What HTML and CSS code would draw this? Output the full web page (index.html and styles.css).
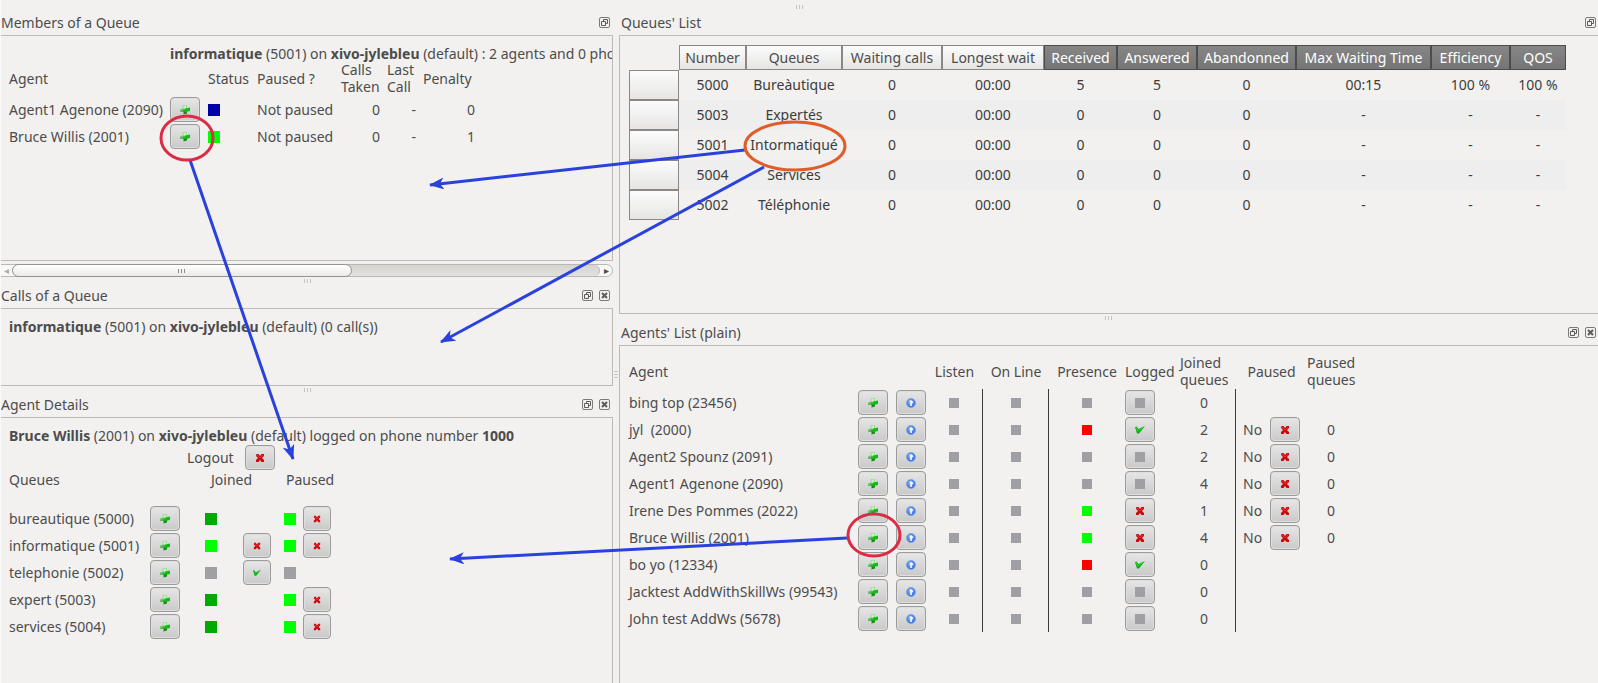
FILE: index.html
```html
<!DOCTYPE html>
<html lang="en">
<head>
<meta charset="utf-8">
<title>Queues and agents</title>
<link rel="stylesheet" href="styles.css">
</head>
<body>
<svg class="defs" aria-hidden="true">
  <defs>
    <linearGradient id="g-left" x1="0" y1="0" x2="1" y2="1"><stop offset="0" stop-color="#a5e09e"/><stop offset="1" stop-color="#158a15"/></linearGradient>
    <radialGradient id="g-info" cx=".45" cy=".4" r=".6"><stop offset="0" stop-color="#a9c8fb"/><stop offset=".6" stop-color="#4c86ee"/><stop offset="1" stop-color="#3a6fd8"/></radialGradient>
    <marker id="head" viewBox="0 0 15 12" refX="14" refY="6" markerWidth="15" markerHeight="12" markerUnits="userSpaceOnUse" orient="auto"><path d="M15 6 0 0l4 6-4 6z" fill="#2a41dc"/></marker>
  </defs>
  <symbol id="plus" viewBox="0 0 10 10"><path d="M3 .5 6.500 0V3.500L4 5 3 4z" fill="#c9efc2" stroke="#8bd884" stroke-width=".7"/><path d="M0 4 4 3.500 5 6.500 0 7z" fill="url(#g-left)"/><path d="M3.500 6 7 5V8.500L3.500 9.500z" fill="#178a17"/><path d="M4.500 3.700 10 2.500V6L4.500 7.200z" fill="#0fbc12"/></symbol>
  <symbol id="info" viewBox="0 0 10 10"><circle cx="5" cy="5" r="4.500" fill="url(#g-info)" stroke="#7f9fdc" stroke-width=".8"/><path d="M3.500 2.500h2.200L7.500 4.200 5.800 5.500V8H4.300V4.500z" fill="#fff"/></symbol>
  <symbol id="cross" viewBox="-.5 -.5 10 10"><path d="M1 .5h2L4.500 2.500 6 .5h2.500v2L6.500 4.500l2 2v2H6L4.500 6.500 3 8.500H.5v-2l2-2-2-2z" fill="#cb0a0f"/><path d="M1.500 1.500 4.500 4.500 7.500 1.500" fill="none" stroke="#e8322e"/></symbol>
  <symbol id="tick" viewBox="0 0 10 8"><path d="M0 1 1.500.5 3.500 3 10 0 4 7.500H2z" fill="#12a916"/><path d="M1 1.500 3 5 8 1.500" fill="none" stroke="#23dd2b"/></symbol>
  <symbol id="float" viewBox="0 0 11 11"><rect x=".5" y=".5" width="10" height="10" rx="1.500" fill="none" stroke="#7b7a78"/><path d="M4.500 4V2.500h4v4H7M2.500 4.500h4v4h-4z" fill="none" stroke="#5c5b59"/></symbol>
  <symbol id="close" viewBox="0 0 11 11"><rect x=".5" y=".5" width="10" height="10" rx="1.500" fill="none" stroke="#7b7a78"/><path d="m3 3 5 5m0-5-5 5" stroke="#5c5b59" stroke-width="2"/></symbol>
</svg>

<div class="window">
  <div class="grip-row"><span class="grip"></span></div>
  <div class="docks">
    <div class="column">
      <section class="dock">
        <header class="dock-title"><h2>Members of a Queue</h2><button class="tool" aria-label="Float"><svg><use href="#float"/></svg></button></header>
        <div class="dock-body members-body">
          <table class="members">
            <colgroup><col class="c-name"><col class="c-btn"><col class="c-status"><col class="c-paused"><col class="c-taken"><col class="c-last"><col class="c-penalty"></colgroup>
            <tbody>
              <tr class="caption"><td></td><td colspan="6"><b>informatique</b> (5001) on <b>xivo-jylebleu</b> (default) : 2 agents and 0 phones</td></tr>
              <tr class="heads"><th>Agent</th><th></th><th>Status</th><th>Paused ?</th><th>Calls<br>Taken</th><th class="gap">Last<br>Call</th><th class="gap">Penalty</th></tr>
              <tr><td>Agent1 Agenone (2090)</td><td><button class="btn" aria-label="Agent details"><svg class="i10"><use href="#plus"/></svg></button></td><td><i class="led big blue"></i></td><td>Not paused</td><td class="num">0</td><td class="num">-</td><td class="num">0</td></tr>
              <tr><td>Bruce Willis (2001)</td><td><button class="btn" aria-label="Agent details"><svg class="i10"><use href="#plus"/></svg></button></td><td><i class="led big green"></i></td><td>Not paused</td><td class="num">0</td><td class="num">-</td><td class="num">1</td></tr>
            </tbody>
          </table>
        </div>
        <div class="scroll"><span class="arrow off">◂</span><span class="track"><span class="thumb"><span class="grip dark"></span></span></span><span class="arrow">▸</span></div>
      </section>
      <div class="grip-row"><span class="grip"></span></div>
      <section class="dock">
        <header class="dock-title"><h2>Calls of a Queue</h2><button class="tool" aria-label="Float"><svg><use href="#float"/></svg></button><button class="tool" aria-label="Close"><svg><use href="#close"/></svg></button></header>
        <div class="dock-body calls-body"><p><b>informatique</b> (5001) on <b>xivo-jylebleu</b> (default) (0 call(s))</p></div>
      </section>
      <div class="grip-row"><span class="grip"></span></div>
      <section class="dock fill">
        <header class="dock-title"><h2>Agent Details</h2><button class="tool" aria-label="Float"><svg><use href="#float"/></svg></button><button class="tool" aria-label="Close"><svg><use href="#close"/></svg></button></header>
        <div class="dock-body fill details-body">
          <p><b>Bruce Willis</b> (2001) on <b>xivo-jylebleu</b> (default) logged on phone number <b>1000</b></p>
          <div class="logout"><label for="logout">Logout</label><button class="btn" id="logout"><svg class="i10"><use href="#cross"/></svg></button></div>
          <table class="details">
            <colgroup><col class="d-name"><col class="d-btn"><col class="d-led"><col class="d-act"><col class="d-led2"><col class="d-act2"></colgroup>
            <tbody>
              <tr class="heads"><th>Queues</th><th></th><th colspan="2" class="joined">Joined</th><th colspan="2" class="paused">Paused</th></tr>
              <tr><td>bureautique (5000)</td><td><button class="btn" aria-label="Queue details"><svg class="i10"><use href="#plus"/></svg></button></td><td><i class="led big deep"></i></td><td></td><td><i class="led big green"></i></td><td><button class="btn small" aria-label="Unpause"><svg class="i8"><use href="#cross"/></svg></button></td></tr>
              <tr><td>informatique (5001)</td><td><button class="btn" aria-label="Queue details"><svg class="i10"><use href="#plus"/></svg></button></td><td><i class="led big green"></i></td><td><button class="btn small" aria-label="Leave"><svg class="i8"><use href="#cross"/></svg></button></td><td><i class="led big green"></i></td><td><button class="btn small" aria-label="Unpause"><svg class="i8"><use href="#cross"/></svg></button></td></tr>
              <tr><td>telephonie (5002)</td><td><button class="btn" aria-label="Queue details"><svg class="i10"><use href="#plus"/></svg></button></td><td><i class="led big"></i></td><td><button class="btn small" aria-label="Join"><svg class="i8"><use href="#tick"/></svg></button></td><td><i class="led big"></i></td><td></td></tr>
              <tr><td>expert (5003)</td><td><button class="btn" aria-label="Queue details"><svg class="i10"><use href="#plus"/></svg></button></td><td><i class="led big deep"></i></td><td></td><td><i class="led big green"></i></td><td><button class="btn small" aria-label="Unpause"><svg class="i8"><use href="#cross"/></svg></button></td></tr>
              <tr><td>services (5004)</td><td><button class="btn" aria-label="Queue details"><svg class="i10"><use href="#plus"/></svg></button></td><td><i class="led big deep"></i></td><td></td><td><i class="led big green"></i></td><td><button class="btn small" aria-label="Unpause"><svg class="i8"><use href="#cross"/></svg></button></td></tr>
            </tbody>
          </table>
        </div>
      </section>
    </div>

    <div class="splitter"><span class="grip upright"></span></div>

    <div class="column right">
      <section class="dock">
        <header class="dock-title"><h2>Queues' List</h2><button class="tool" aria-label="Float"><svg><use href="#float"/></svg></button></header>
        <div class="dock-body open queues-body">
          <table class="queues">
            <colgroup><col class="q-head"><col class="q-num"><col class="q-name"><col class="q-wait"><col class="q-long"><col class="q-rec"><col class="q-ans"><col class="q-aban"><col class="q-max"><col class="q-eff"><col class="q-qos"></colgroup>
            <thead><tr><td></td><th>Number</th><th>Queues</th><th>Waiting calls</th><th>Longest wait</th><th class="dark">Received</th><th class="dark">Answered</th><th class="dark">Abandonned</th><th class="dark">Max Waiting Time</th><th class="dark">Efficiency</th><th class="dark">QOS</th></tr></thead>
            <tbody>
              <tr><th></th><td>5000</td><td>Bureàutique</td><td>0</td><td>00:00</td><td>5</td><td>5</td><td>0</td><td>00:15</td><td>100 %</td><td>100 %</td></tr>
              <tr><th></th><td>5003</td><td>Expertés</td><td>0</td><td>00:00</td><td>0</td><td>0</td><td>0</td><td>-</td><td>-</td><td>-</td></tr>
              <tr><th></th><td>5001</td><td>Intormatiqué</td><td>0</td><td>00:00</td><td>0</td><td>0</td><td>0</td><td>-</td><td>-</td><td>-</td></tr>
              <tr><th></th><td>5004</td><td>Services</td><td>0</td><td>00:00</td><td>0</td><td>0</td><td>0</td><td>-</td><td>-</td><td>-</td></tr>
              <tr><th></th><td>5002</td><td>Téléphonie</td><td>0</td><td>00:00</td><td>0</td><td>0</td><td>0</td><td>-</td><td>-</td><td>-</td></tr>
            </tbody>
          </table>
        </div>
      </section>
      <div class="grip-row"><span class="grip"></span></div>
      <section class="dock fill">
        <header class="dock-title"><h2>Agents' List (plain)</h2><button class="tool" aria-label="Float"><svg><use href="#float"/></svg></button><button class="tool" aria-label="Close"><svg><use href="#close"/></svg></button></header>
        <div class="dock-body open fill agents-body">
          <table class="agents">
            <colgroup><col class="a-name"><col class="a-b1"><col class="a-b2"><col class="a-listen"><col class="a-line"><col class="a-pres"><col class="a-log"><col class="a-join"><col class="a-no"><col class="a-b2"><col class="a-pq"></colgroup>
            <thead><tr class="heads"><th>Agent</th><th></th><th></th><th class="mid inset">Listen</th><th class="mid">On Line</th><th class="mid">Presence</th><th>Logged</th><th>Joined<br>queues</th><th colspan="2" class="mid">Paused</th><th>Paused<br>queues</th></tr></thead>
            <tbody>
              <tr><td>bing top (23456)</td><td><button class="btn" aria-label="Details"><svg class="i10"><use href="#plus"/></svg></button></td><td><button class="btn" aria-label="Information"><svg class="i10"><use href="#info"/></svg></button></td><td class="mid inset rule"><i class="led"></i></td><td class="mid rule"><i class="led"></i></td><td class="mid"><i class="led"></i></td><td><button class="btn" aria-label="Login state"><i class="led"></i></button></td><td class="mid inset rule">0</td><td></td><td></td><td></td></tr>
              <tr><td>jyl&nbsp; (2000)</td><td><button class="btn" aria-label="Details"><svg class="i10"><use href="#plus"/></svg></button></td><td><button class="btn" aria-label="Information"><svg class="i10"><use href="#info"/></svg></button></td><td class="mid inset rule"><i class="led"></i></td><td class="mid rule"><i class="led"></i></td><td class="mid"><i class="led red"></i></td><td><button class="btn" aria-label="Log in"><svg class="i10"><use href="#tick"/></svg></button></td><td class="mid inset rule">2</td><td class="no">No</td><td><button class="btn" aria-label="Pause"><svg class="i10"><use href="#cross"/></svg></button></td><td class="mid">0</td></tr>
              <tr><td>Agent2 Spounz (2091)</td><td><button class="btn" aria-label="Details"><svg class="i10"><use href="#plus"/></svg></button></td><td><button class="btn" aria-label="Information"><svg class="i10"><use href="#info"/></svg></button></td><td class="mid inset rule"><i class="led"></i></td><td class="mid rule"><i class="led"></i></td><td class="mid"><i class="led"></i></td><td><button class="btn" aria-label="Login state"><i class="led"></i></button></td><td class="mid inset rule">2</td><td class="no">No</td><td><button class="btn" aria-label="Pause"><svg class="i10"><use href="#cross"/></svg></button></td><td class="mid">0</td></tr>
              <tr><td>Agent1 Agenone (2090)</td><td><button class="btn" aria-label="Details"><svg class="i10"><use href="#plus"/></svg></button></td><td><button class="btn" aria-label="Information"><svg class="i10"><use href="#info"/></svg></button></td><td class="mid inset rule"><i class="led"></i></td><td class="mid rule"><i class="led"></i></td><td class="mid"><i class="led"></i></td><td><button class="btn" aria-label="Login state"><i class="led"></i></button></td><td class="mid inset rule">4</td><td class="no">No</td><td><button class="btn" aria-label="Pause"><svg class="i10"><use href="#cross"/></svg></button></td><td class="mid">0</td></tr>
              <tr><td>Irene Des Pommes (2022)</td><td><button class="btn" aria-label="Details"><svg class="i10"><use href="#plus"/></svg></button></td><td><button class="btn" aria-label="Information"><svg class="i10"><use href="#info"/></svg></button></td><td class="mid inset rule"><i class="led"></i></td><td class="mid rule"><i class="led"></i></td><td class="mid"><i class="led green"></i></td><td><button class="btn" aria-label="Log out"><svg class="i10"><use href="#cross"/></svg></button></td><td class="mid inset rule">1</td><td class="no">No</td><td><button class="btn" aria-label="Pause"><svg class="i10"><use href="#cross"/></svg></button></td><td class="mid">0</td></tr>
              <tr><td>Bruce Willis (2001)</td><td><button class="btn" aria-label="Details"><svg class="i10"><use href="#plus"/></svg></button></td><td><button class="btn" aria-label="Information"><svg class="i10"><use href="#info"/></svg></button></td><td class="mid inset rule"><i class="led"></i></td><td class="mid rule"><i class="led"></i></td><td class="mid"><i class="led green"></i></td><td><button class="btn" aria-label="Log out"><svg class="i10"><use href="#cross"/></svg></button></td><td class="mid inset rule">4</td><td class="no">No</td><td><button class="btn" aria-label="Pause"><svg class="i10"><use href="#cross"/></svg></button></td><td class="mid">0</td></tr>
              <tr><td>bo yo (12334)</td><td><button class="btn" aria-label="Details"><svg class="i10"><use href="#plus"/></svg></button></td><td><button class="btn" aria-label="Information"><svg class="i10"><use href="#info"/></svg></button></td><td class="mid inset rule"><i class="led"></i></td><td class="mid rule"><i class="led"></i></td><td class="mid"><i class="led red"></i></td><td><button class="btn" aria-label="Log in"><svg class="i10"><use href="#tick"/></svg></button></td><td class="mid inset rule">0</td><td></td><td></td><td></td></tr>
              <tr><td>Jacktest AddWithSkillWs (99543)</td><td><button class="btn" aria-label="Details"><svg class="i10"><use href="#plus"/></svg></button></td><td><button class="btn" aria-label="Information"><svg class="i10"><use href="#info"/></svg></button></td><td class="mid inset rule"><i class="led"></i></td><td class="mid rule"><i class="led"></i></td><td class="mid"><i class="led"></i></td><td><button class="btn" aria-label="Login state"><i class="led"></i></button></td><td class="mid inset rule">0</td><td></td><td></td><td></td></tr>
              <tr><td>John test AddWs (5678)</td><td><button class="btn" aria-label="Details"><svg class="i10"><use href="#plus"/></svg></button></td><td><button class="btn" aria-label="Information"><svg class="i10"><use href="#info"/></svg></button></td><td class="mid inset rule"><i class="led"></i></td><td class="mid rule"><i class="led"></i></td><td class="mid"><i class="led"></i></td><td><button class="btn" aria-label="Login state"><i class="led"></i></button></td><td class="mid inset rule">0</td><td></td><td></td><td></td></tr>
            </tbody>
          </table>
        </div>
      </section>
    </div>
  </div>

  <svg class="notes" viewBox="0 0 1598 683" preserveAspectRatio="none" aria-hidden="true">
    <g fill="none" stroke="#2a41dc" stroke-width="3">
      <path d="M190 160 293 459" marker-end="url(#head)"/>
      <path d="M745 150 430 185" marker-end="url(#head)"/>
      <path d="M764 167 441 342" marker-end="url(#head)"/>
      <path d="M847 538 450 559" marker-end="url(#head)"/>
    </g>
    <g fill="none" stroke="#dc2b45" stroke-width="3">
      <ellipse cx="187" cy="138" rx="26" ry="22"/>
      <ellipse cx="874" cy="535" rx="26" ry="21"/>
      <ellipse cx="795" cy="146" rx="50" ry="24" stroke="#e05c2a"/>
    </g>
  </svg>
</div>
</body>
</html>
```

FILE: styles.css
```css
* { box-sizing: border-box; }
body {
  margin: 0;
  background: #f2f1f0;
  color: #4c4c4c;
  font: 14px/18px "Noto Sans", "Open Sans", sans-serif;
}
h2, p { margin: 0; font-size: 14px; font-weight: 400; white-space: nowrap; }
.defs { position: absolute; width: 0; height: 0; }

.window {
  position: relative;
  display: flex;
  flex-direction: column;
  min-height: 100vh;
  overflow: hidden;
  border-left: 1px solid #fbfbfb;
}
.docks {
  flex: 1;
  display: grid;
  grid-template-columns: minmax(0, 612fr) 6px minmax(0, 979fr);
}
.column { display: flex; flex-direction: column; min-width: 0; }
.fill { flex: 1; }
.dock { display: flex; flex-direction: column; }

/* Splitter handles */
.grip-row { display: flex; justify-content: center; align-items: center; height: 8px; }
.window > .grip-row { height: 12px; padding-top: 2px; }
.grip {
  width: 7px;
  height: 4px;
  background: repeating-linear-gradient(90deg, #c4c3c1 0 1px, transparent 1px 3px);
}
.grip.dark { width: 8px; background: repeating-linear-gradient(90deg, #8a8987 0 1px, transparent 1px 3px); }
.grip.upright { width: 4px; height: 8px; background: repeating-linear-gradient(#c4c3c1 0 1px, transparent 1px 3px); }
.splitter { display: flex; justify-content: center; align-items: center; padding-top: 54px; }

/* Dock frames */
.dock-title { display: flex; align-items: center; gap: 6px; height: 23px; padding: 0 3px 2px 0; }
.right .dock-title { padding: 0 2px 2px 2px; }
.dock-title h2 { flex: 1; }
.tool { width: 11px; height: 11px; padding: 0; border: 0; background: none; color: inherit; }
.tool svg { display: block; width: 11px; height: 11px; }
.dock-body { border: solid #bbbab8; border-width: 1px 1px 1px 0; padding: 8px; overflow: hidden; }
.dock-body.open { border-width: 1px 0 1px 1px; padding-left: 9px; }
.dock-body.fill { border-bottom: 0; }
.members-body { height: 226px; }
.calls-body { height: 78px; padding-top: 9px; }
.queues-body { height: 279px; padding-top: 9px; }

/* Horizontal scroll bar */
.scroll {
  display: flex;
  align-items: stretch;
  height: 13px;
  margin-top: 3px;
  border: 1px solid #b9b8b5;
  border-left: 0;
  border-radius: 0 7px 7px 0;
  background: #f8f8f7;
}
.scroll .arrow { width: 12px; font-size: 10px; line-height: 10px; text-align: center; }
.scroll .off { width: 11px; color: #b0afad; }
.track { flex: 1; display: flex; background: linear-gradient(#d5d4d0, #e2e1dd); border-radius: 6px; border-right: 1px solid #b9b8b5; }
.thumb {
  display: flex;
  align-items: center;
  justify-content: center;
  width: 58%;
  border: 1px solid #94938f;
  border-radius: 7px;
  margin: -1px 0;
  background: linear-gradient(#fff, #eceae8);
}

/* Tables */
table { border-collapse: separate; border-spacing: 0; table-layout: fixed; }
td, th { padding: 0; font-weight: 400; text-align: left; white-space: nowrap; }
.heads { line-height: 17px; }
.mid { text-align: center; }
.inset { padding-right: 7px; }
.num { text-align: right; }
tbody tr { height: 27px; }

.btn {
  display: flex;
  align-items: center;
  justify-content: center;
  width: 30px;
  height: 25px;
  padding: 0;
  border: 1px solid #9b9b9a;
  border-radius: 4px;
  background: linear-gradient(#e6e6e6, #c9c9c9);
  box-shadow: inset 0 0 0 1px #dedede;
}
.btn.small { width: 28px; }
.i10 { width: 10px; height: 10px; }
.i8 { width: 8px; height: 8px; }
.led { display: block; width: 10px; height: 10px; margin: 0 auto; background: #a09fa4; }
.led.big { width: 12px; height: 12px; margin: 0; }
.led.blue { background: #0000aa; }
.led.green { background: #00ff00; }
.led.deep { background: #00aa00; }
.led.red { background: #ff0000; }

.members { width: 466px; }
.members .caption { height: 17px; line-height: 15px; }
.members .caption td { padding-top: 2px; }
.members .heads { height: 35px; }
.members .heads th, .agents .heads th { padding-bottom: 1px; }
.members .gap { padding-left: 7px; }
.c-name { width: 161px; }
.c-btn { width: 38px; }
.c-status { width: 49px; }
.c-paused { width: 84px; }
.c-taken { width: 39px; }
.c-last { width: 36px; }
.c-penalty { width: 59px; }

.details-body p { height: 19px; padding-top: 1px; }
.logout { display: flex; align-items: center; gap: 11px; padding-left: 178px; }
.details { width: 323px; }
.details .heads { height: 35px; vertical-align: top; }
.details .heads th { padding-top: 1px; }
.details .joined { padding-left: 6px; }
.details .paused { padding-left: 2px; }
.d-name { width: 141px; }
.d-btn { width: 55px; }
.d-led { width: 38px; }
.d-act { width: 41px; }
.d-led2 { width: 19px; }
.d-act2 { width: 29px; }

.queues { width: 937px; color: #3c3c3c; }
.queues td { text-align: center; }
.queues th {
  border: 1px solid #8a8886;
  background: linear-gradient(#fcfcfc, #e6e5e4);
  color: #4c4c4c;
  text-align: center;
}
.queues th.dark { border-color: #4c4c4c; background: linear-gradient(#868686, #757575); color: #fff; }
.queues thead tr { height: 25px; }
.queues tbody tr { height: 30px; }
.queues tbody tr:nth-child(even) { background: #eeeeee; }
.q-head { width: 50px; }
.q-num { width: 67px; }
.q-name { width: 96px; }
.q-wait { width: 100px; }
.q-long { width: 102px; }
.q-rec { width: 73px; }
.q-ans { width: 80px; }
.q-aban { width: 99px; }
.q-max { width: 135px; }
.q-eff { width: 79px; }
.q-qos { width: 56px; }

.agents-body { padding-top: 8px; }
.agents { width: 726px; }
.agents .heads { height: 35px; }
.agents .rule { border-right: 1px solid #3c3c3c; }
.agents .no { padding-left: 7px; }
.a-name { width: 229px; }
.a-b1 { width: 38px; }
.a-b2 { width: 37px; }
.a-listen { width: 50px; }
.a-line { width: 66px; }
.a-pres { width: 76px; }
.a-log { width: 55px; }
.a-join { width: 56px; }
.a-no { width: 34px; }
.a-pq { width: 48px; }

/* Callouts drawn over the panels */
.notes { position: absolute; inset: 0 auto auto -1px; width: calc(100% + 1px); height: 100%; pointer-events: none; }
```
